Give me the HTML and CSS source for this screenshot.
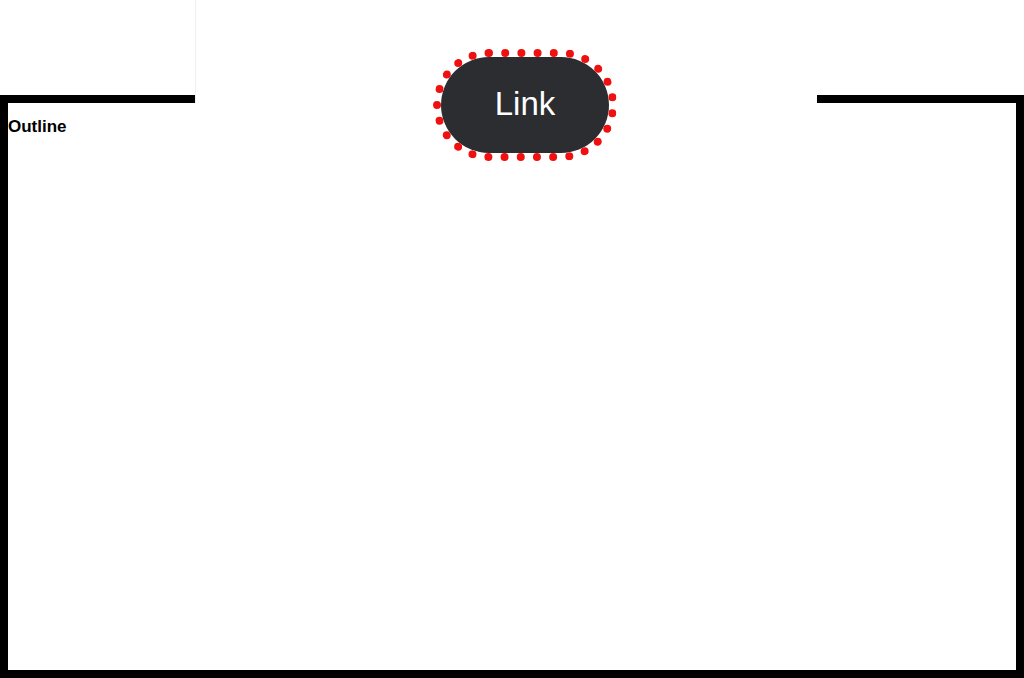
FILE: index.html
```html
<!DOCTYPE html>
<html>
<head>
<meta charset="utf-8">
<link rel="stylesheet" href="styles.css">
</head>
<body>
<div class="page">
  <div class="frame">
    <p class="title">Outline</p>
  </div>
  <div class="patch">
    <a class="link" href="#">Link</a>
  </div>
</div>
</body>
</html>
```
FILE: styles.css
```css
html, body {
  margin: 0;
  padding: 0;
  background: #ffffff;
}
body {
  font-family: "Liberation Sans", Arial, sans-serif;
}
.page {
  position: relative;
  width: 1024px;
  height: 678px;
  overflow: hidden;
}
.frame {
  margin-top: 95px;
  height: 583px;
  box-sizing: border-box;
  border: 8px solid #000000;
  background: #ffffff;
}
.title {
  margin: 14px 0 0 0;
  font-size: 17px;
  font-weight: bold;
  color: #000000;
  line-height: 20px;
}
.patch {
  position: absolute;
  left: 195px;
  top: 0;
  width: 622px;
  height: 103px;
  background: #ffffff;
  border-left: 1px solid #f0f0f0;
  box-sizing: border-box;
}
.link {
  position: absolute;
  left: 245px;
  top: 57px;
  width: 168px;
  height: 96px;
  border-radius: 48px;
  background: #2c2d31;
  color: #ffffff;
  text-decoration: none;
  font-size: 33px;
  line-height: 1;
  display: flex;
  align-items: center;
  justify-content: center;
  padding-bottom: 3px;
  box-sizing: border-box;
  outline: 8px dotted #f01010;
  outline-offset: 0;
}
```
